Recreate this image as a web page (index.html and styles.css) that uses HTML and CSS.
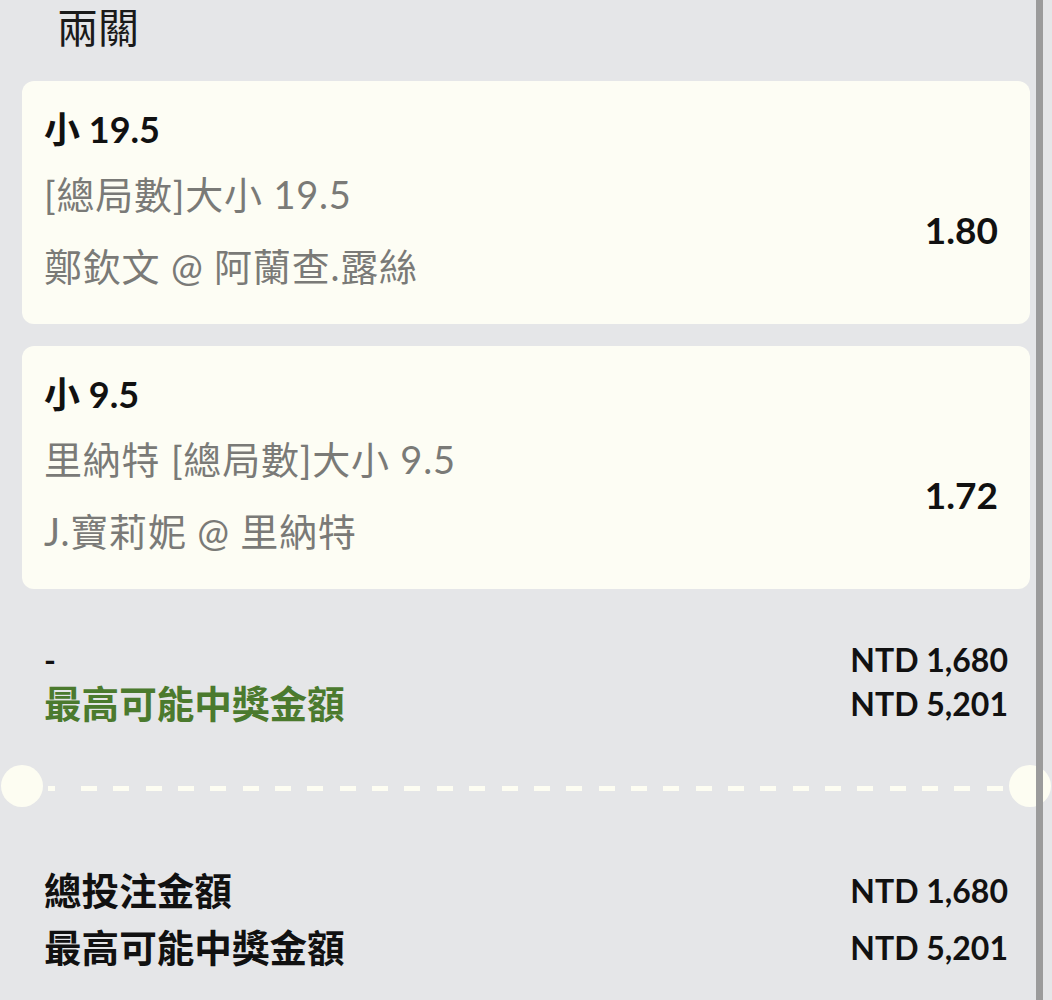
FILE: index.html
```html
<!DOCTYPE html>
<html lang="zh-Hant">
<head>
    <meta charset="UTF-8">
    <meta name="viewport" content="width=device-width, initial-scale=1.0">
    <title>兩關</title>
    <link rel="stylesheet" href="styles.css">
</head>
<body>
    <div class="page">
        <main class="panel">
            <h1 class="title">兩關</h1>

            <section class="bet-card">
                <div class="bet-info">
                    <div class="bet-pick">小 19.5</div>
                    <div class="bet-market">[總局數]大小 19.5</div>
                    <div class="bet-match">鄭欽文 @ 阿蘭查.露絲</div>
                </div>
                <div class="bet-odds">1.80</div>
            </section>

            <section class="bet-card">
                <div class="bet-info">
                    <div class="bet-pick">小 9.5</div>
                    <div class="bet-market">里納特 [總局數]大小 9.5</div>
                    <div class="bet-match">J.寶莉妮 @ 里納特</div>
                </div>
                <div class="bet-odds">1.72</div>
            </section>

            <div class="summary">
                <div class="summary-labels">
                    <div class="stake-label">-</div>
                    <div class="win-label">最高可能中獎金額</div>
                </div>
                <div class="amounts">
                    <div>NTD 1,680</div>
                    <div>NTD 5,201</div>
                </div>
            </div>

            <div class="ticket-cut">
                <span class="notch"></span>
                <span class="dashes"></span>
                <span class="notch"></span>
            </div>

            <div class="totals">
                <div class="totals-labels">
                    <div>總投注金額</div>
                    <div>最高可能中獎金額</div>
                </div>
                <div class="amounts">
                    <div>NTD 1,680</div>
                    <div>NTD 5,201</div>
                </div>
            </div>
        </main>
        <div class="rail"></div>
    </div>
</body>
</html>
```

FILE: styles.css
```css
* {
    margin: 0;
    padding: 0;
    box-sizing: border-box;
}
body {
    background-color: #e5e6e8;
    color: #111;
    font-family: "Lato", "Noto Sans CJK TC", sans-serif;
    height: 100vh;
    overflow: hidden;
}
.page {
    display: flex;
    height: 100%;
}
.panel {
    width: 1036px;
    flex: none;
    padding: 0 6px 0 22px;
}
.rail {
    width: 7px;
    flex: none;
    background-color: #9b9b9b;
}
.title {
    font-size: 41px;
    font-weight: 400;
    line-height: 56px;
    padding-left: 35px;
    margin-bottom: 25px;
    color: #1a1a1a;
}
.bet-card {
    display: flex;
    justify-content: space-between;
    align-items: flex-start;
    background-color: #fdfdf4;
    border-radius: 12px;
    padding: 20px 32px 23px 22px;
}
.bet-card + .bet-card {
    margin-top: 22px;
}
.bet-pick {
    font-size: 36px;
    font-weight: bold;
    line-height: 56px;
}
.bet-market,
.bet-match {
    font-size: 38px;
    letter-spacing: 0.8px;
    color: #7a7a77;
}
.bet-market {
    line-height: 74px;
}
.bet-match {
    line-height: 70px;
}
.bet-odds {
    font-size: 37px;
    font-weight: bold;
    line-height: 48px;
    padding-top: 105px;
}
.summary,
.totals {
    display: flex;
    justify-content: space-between;
    padding: 0 22px;
    font-weight: bold;
}
.summary {
    margin-top: 49px;
    line-height: 44px;
}
.stake-label {
    font-size: 32px;
}
.win-label {
    font-size: 37.6px;
    color: #4b7a2e;
}
.amounts {
    font-size: 32px;
    text-align: right;
}
.ticket-cut {
    display: flex;
    align-items: center;
    margin: 39px -21px 0;
}
.notch {
    width: 42px;
    height: 42px;
    flex: none;
    border-radius: 50%;
    background-color: #fdfdf2;
}
.dashes {
    flex: 1;
    height: 5px;
    margin: 5px 0 0 5px;
    background:
        linear-gradient(#fdfdf2, #fdfdf2) 0 0 / 7px 100% no-repeat,
        repeating-linear-gradient(90deg, #fdfdf2 0 16px, transparent 16px 32.35px) 33px 0 / calc(100% - 33px) 100% no-repeat;
}
.totals {
    margin-top: 55px;
    line-height: 57px;
}
.totals-labels {
    font-size: 37.6px;
}
```
